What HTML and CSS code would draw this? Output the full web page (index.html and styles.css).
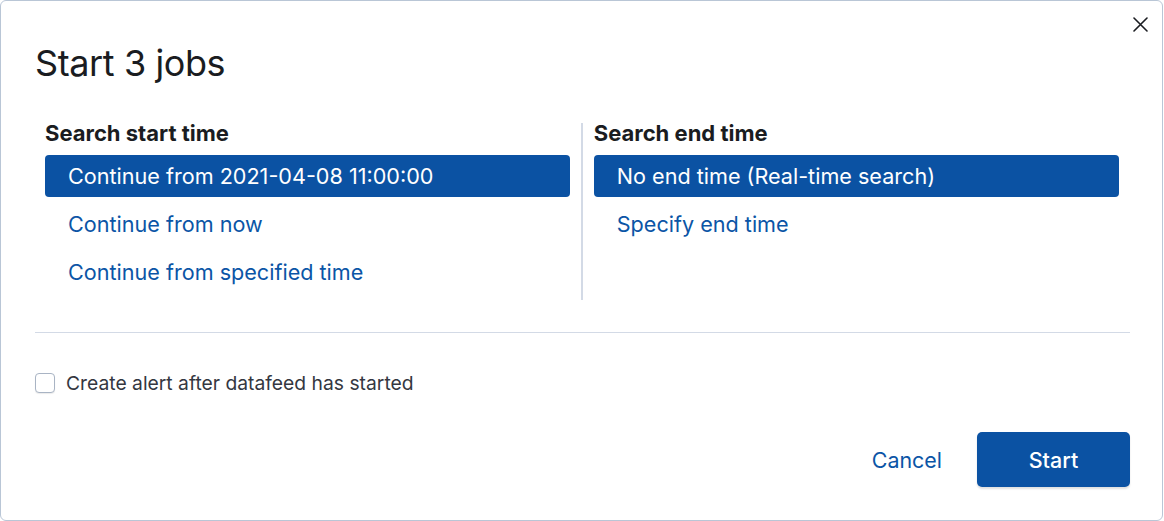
FILE: index.html
```html
<!DOCTYPE html>
<html lang="en">
<head>
<meta charset="utf-8">
<title>Start 3 jobs</title>
<link rel="stylesheet" href="styles.css">
</head>
<body>
<div class="modal">
  <button class="close" aria-label="Close">
    <svg width="15" height="15" viewBox="0 0 15 15"><path d="M1 1 L14 14 M14 1 L1 14" stroke="#1a1c21" stroke-width="1.6" fill="none" stroke-linecap="round"/></svg>
  </button>
  <h1 class="title">Start 3 jobs</h1>
  <div class="columns">
    <div class="col">
      <h2 class="col-title">Search start time</h2>
      <ul class="options">
        <li class="option selected">Continue from 2021-04-08 11:00:00</li>
        <li class="option">Continue from now</li>
        <li class="option">Continue from specified time</li>
      </ul>
    </div>
    <div class="sep"></div>
    <div class="col">
      <h2 class="col-title">Search end time</h2>
      <ul class="options">
        <li class="option selected">No end time (Real-time search)</li>
        <li class="option">Specify end time</li>
      </ul>
    </div>
  </div>
  <hr class="rule">
  <label class="check">
    <span class="box"></span>
    <span class="check-label">Create alert after datafeed has started</span>
  </label>
  <div class="footer">
    <button class="cancel">Cancel</button>
    <button class="start">Start</button>
  </div>
</div>
</body>
</html>
```
FILE: styles.css
```css
* { box-sizing: border-box; }
html, body { margin: 0; padding: 0; background: #fff; }
body { font-family: Inter, "Noto Sans", sans-serif; color: #1a1c21; }

.modal {
  position: relative;
  width: 1163px;
  height: 521px;
  border: 1px solid #b9c6d6;
  border-radius: 6px;
  background: #fff;
  padding: 0 32px 0 34px;
}

.close {
  position: absolute;
  top: 16px;
  right: 14px;
  border: 0;
  background: none;
  padding: 0;
  width: 15px;
  height: 15px;
  display: flex;
}

.title {
  margin: 40px 0 0 0;
  font-size: 36px;
  line-height: 44px;
  font-weight: 400;
  letter-spacing: -0.4px;
}

.columns {
  display: flex;
  margin-top: 35px;
  padding: 0 11px 0 10px;
}
.col { flex: 1; padding-bottom: 7px; }
.sep {
  width: 1.5px;
  background: #d3dae6;
  margin: 3px 11px 0 11px;
}

.col-title {
  margin: 0;
  font-size: 22px;
  line-height: 26px;
  font-weight: 700;
  letter-spacing: 0;
}

.options {
  list-style: none;
  margin: 9px 0 0;
  padding: 0;
  display: flex;
  flex-direction: column;
  gap: 6px;
}
.option {
  height: 42px;
  display: flex;
  align-items: center;
  padding-left: 23px;
  font-size: 21.6px;
  color: #0b55a6;
  border-radius: 4px;
}
.option.selected {
  background: #0b52a3;
  color: #fff;
}

.rule {
  border: 0;
  border-top: 1px solid #d3dae6;
  margin: 32px 0 0;
}

.check {
  display: flex;
  align-items: center;
  margin-top: 40px;
  height: 20px;
}
.box {
  width: 20px;
  height: 20px;
  border: 1px solid #a9b4c4;
  border-radius: 4px;
  background: #fff;
  box-shadow: 0 1px 1px rgba(0,0,0,0.08);
}
.check-label {
  margin-left: 11px;
  font-size: 19.3px;
  color: #343741;
}

.footer {
  display: flex;
  justify-content: flex-end;
  align-items: center;
  margin-top: 39px;
}
.cancel {
  font-family: inherit;
  border: 0;
  background: none;
  color: #0b55a6;
  font-size: 21.4px;
  padding: 0;
  margin-right: 35px;
}
.start {
  font-family: inherit;
  width: 153px;
  height: 55px;
  border: 0;
  border-radius: 5px;
  background: #0b52a3;
  color: #fff;
  font-size: 21.5px;
  font-weight: 500;
  box-shadow: 0 2px 2px rgba(0,0,0,0.12);
}
```
